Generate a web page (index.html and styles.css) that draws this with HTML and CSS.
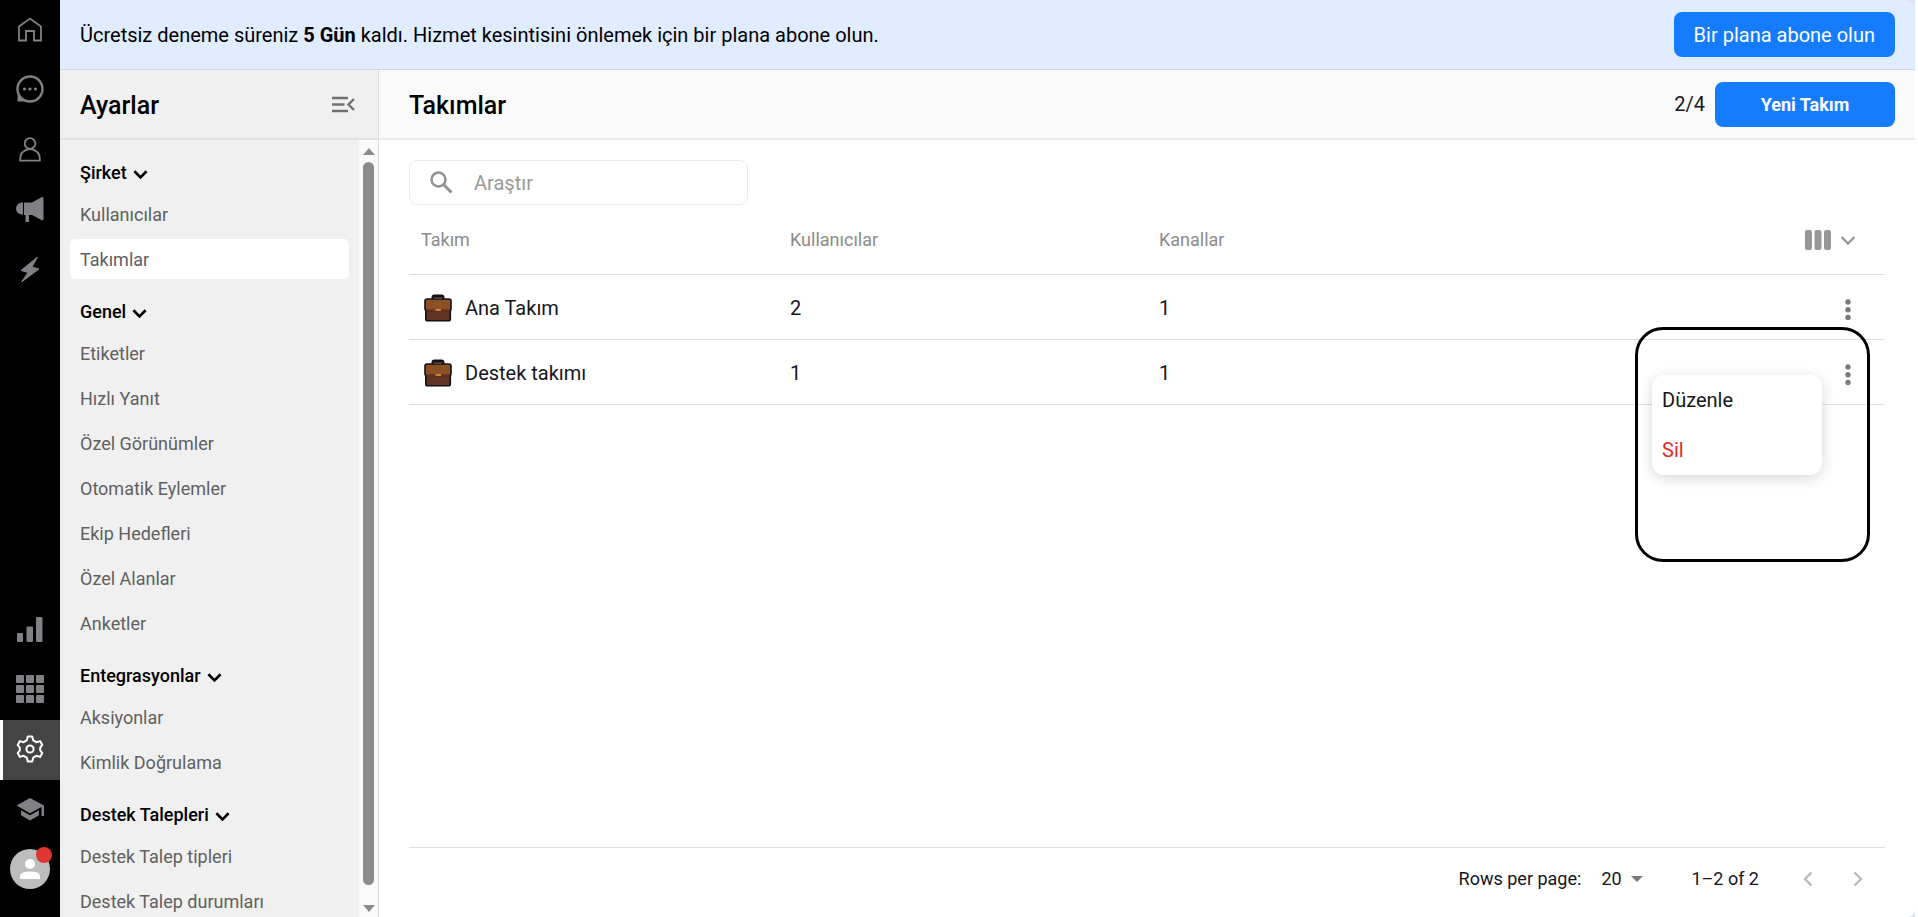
FILE: index.html
```html
<!DOCTYPE html>
<html lang="tr">
<head>
  <meta charset="UTF-8">
  <meta name="viewport" content="width=device-width, initial-scale=1.0">
  <title>Takımlar</title>
  <link rel="stylesheet" href="styles.css">
</head>
<body>
  <!-- Shared icons -->
  <svg class="sprite" aria-hidden="true">
    <symbol id="chevron" viewBox="0 0 16 16">
      <path d="M1.5 4.5 L8 11 L14.5 4.5" fill="none" stroke="currentColor" stroke-width="2.8"/>
    </symbol>
    <symbol id="dots" viewBox="0 0 6 22">
      <circle cx="3" cy="3" r="2.7"/><circle cx="3" cy="10.7" r="2.7"/><circle cx="3" cy="18.4" r="2.7"/>
    </symbol>
    <symbol id="briefcase" viewBox="0 0 28 28">
      <path d="M9 5V3.5Q9 2 10.5 2h7Q19 2 19 3.5V5" fill="none" stroke="#111118" stroke-width="3"/>
      <path d="M9.5 5V3.5h9V5" fill="none" stroke="#5a2d20" stroke-width="1"/>
      <path d="M1.8 16h24.5v9q0 1.8-1.8 1.8h-21q-1.7 0-1.7-1.8z" fill="#613424" stroke="#111118" stroke-width="1.6"/>
      <path d="M1 7q0-2 2-2h22q2 0 2 2v8q0 1.500-1.500 1.500h-23Q1 16.500 1 15z" fill="#8b5024" stroke="#111118" stroke-width="1.6"/>
      <path d="M2.5 15.700h23v1.800h-23z" fill="#613424"/>
      <path d="M11.500 15h5.500v2h-5.500z" fill="#c98428"/>
    </symbol>
  </svg>

  <div class="app">
    <nav class="rail" aria-label="Ana menü">
      <a href="#" aria-label="Ana sayfa">
        <svg width="24" height="25" viewBox="0 0 24 25"><path d="M1 9.500 L12 1.500 L23 9.500 V23.500 H16 V14 H8 V23.500 H1 Z" fill="none" stroke="currentColor" stroke-width="1.800"/></svg>
      </a>
      <a href="#" aria-label="Sohbetler">
        <svg width="28" height="28" viewBox="0 0 28 28">
          <circle cx="14" cy="14" r="12.500" fill="none" stroke="currentColor" stroke-width="2.400"/>
          <path d="M1.500 19.500V26.500H11L6.500 23z" fill="currentColor"/>
          <g fill="currentColor"><circle cx="8.500" cy="14" r="1.600"/><circle cx="14" cy="14" r="1.600"/><circle cx="19.500" cy="14" r="1.600"/></g>
        </svg>
      </a>
      <a href="#" aria-label="Kişiler">
        <svg width="22" height="25" viewBox="0 0 22 25"><g fill="none" stroke="currentColor" stroke-width="1.800"><circle cx="11" cy="6.500" r="5.300"/><path d="M1.200 23.700v-2.200Q1.200 13.500 11 11.800Q20.800 13.500 20.800 21.500v2.200z"/></g></svg>
      </a>
      <a href="#" aria-label="Kampanyalar">
        <svg width="28" height="25" viewBox="0 0 28 25" fill="currentColor"><path d="M7 5.500v12H6a6 6 0 0 1 0-12zM8 5.500h8l9-5q2.500-1.200 2.500 1v20.500q0 2-2.200 1l-9-5H13v7H9.500v-7H8z"/></svg>
      </a>
      <a href="#" aria-label="Otomasyon">
        <svg width="20" height="25" viewBox="0 0 20 25" fill="currentColor"><path d="M17.500 0 1 13.500 8 15.500 1.500 25 19 12 12 10z" stroke="currentColor"/></svg>
      </a>
      <span class="spacer"></span>
      <a href="#" aria-label="Raporlar">
        <svg width="26" height="25" viewBox="0 0 26 25" fill="currentColor"><rect y="16" width="6" height="9" rx="1"/><rect x="9.500" y="9.500" width="6.500" height="15.500" rx="1"/><rect x="19" width="6.500" height="25" rx="1"/></svg>
      </a>
      <a href="#" aria-label="Uygulamalar">
        <svg width="28" height="28" viewBox="0 0 28 28" fill="currentColor">
          <rect width="8" height="8" rx="1"/><rect x="10" width="8" height="8" rx="1"/><rect x="20" width="8" height="8" rx="1"/>
          <rect y="10" width="8" height="8" rx="1"/><rect x="10" y="10" width="8" height="8" rx="1"/><rect x="20" y="10" width="8" height="8" rx="1"/>
          <rect y="20" width="8" height="8" rx="1"/><rect x="10" y="20" width="8" height="8" rx="1"/><rect x="20" y="20" width="8" height="8" rx="1"/>
        </svg>
      </a>
      <a href="#" class="active" aria-label="Ayarlar">
        <svg width="28" height="28" viewBox="0 0 28 28" fill="none" stroke="currentColor" stroke-width="2">
          <path d="M11.800 1.500h4.400l1 3.800 3.200 1.900 3.700-1.100 2.200 3.800-2.100 2.700v2.800l2.100 2.700-2.200 3.800-3.700-1.100-3.200 1.900-1 3.800h-4.400l-1-3.800-3.200-1.900-3.700 1.100-2.200-3.800 2.100-2.700v-2.800L1.700 9.900l2.200-3.800 3.700 1.100 3.200-1.900z" stroke-linejoin="round"/>
          <circle cx="14" cy="14" r="3.600"/>
        </svg>
      </a>
      <a href="#" aria-label="Akademi">
        <svg width="28" height="23" viewBox="0 0 28 23" fill="currentColor"><path d="M14 0 28 7.500V18h-2.500V9L14 15.300.5 7.500zM5 12.300l9 5 9-5v5L14 22.500 5 17.300z"/></svg>
      </a>
      <a href="#" aria-label="Profil">
        <span class="avatar">
          <svg width="20" height="20" viewBox="0 0 20 20" fill="#fff"><circle cx="10" cy="5" r="5"/><path d="M0 20v-2.500Q0 12.500 10 12.500T20 17.500V20z"/></svg>
          <span class="badge"></span>
        </span>
      </a>
    </nav>

    <div class="page">
      <div class="banner">
        <p>Ücretsiz deneme süreniz <b>5 Gün</b> kaldı. Hizmet kesintisini önlemek için bir plana abone olun.</p>
        <button class="btn">Bir plana abone olun</button>
      </div>

      <div class="body">
        <aside class="sidebar">
          <header class="bar">
            <h2>Ayarlar</h2>
            <button class="icon-btn collapse" aria-label="Menüyü daralt">
              <svg width="23" height="17" viewBox="0 0 23 17" fill="none" stroke="currentColor" stroke-width="2.4"><path d="M0 2h16M0 8.500h12.500M0 15h16M22 3l-5.500 5.500L22 14"/></svg>
            </button>
          </header>
          <div class="scroll">
            <div class="groups">
              <section>
                <button class="group">Şirket <svg><use href="#chevron"/></svg></button>
                <a href="#">Kullanıcılar</a>
                <a href="#" class="selected">Takımlar</a>
              </section>
              <section>
                <button class="group">Genel <svg><use href="#chevron"/></svg></button>
                <a href="#">Etiketler</a>
                <a href="#">Hızlı Yanıt</a>
                <a href="#">Özel Görünümler</a>
                <a href="#">Otomatik Eylemler</a>
                <a href="#">Ekip Hedefleri</a>
                <a href="#">Özel Alanlar</a>
                <a href="#">Anketler</a>
              </section>
              <section>
                <button class="group">Entegrasyonlar <svg><use href="#chevron"/></svg></button>
                <a href="#">Aksiyonlar</a>
                <a href="#">Kimlik Doğrulama</a>
              </section>
              <section>
                <button class="group">Destek Talepleri <svg><use href="#chevron"/></svg></button>
                <a href="#">Destek Talep tipleri</a>
                <a href="#">Destek Talep durumları</a>
              </section>
            </div>
            <div class="scrollbar" aria-hidden="true">
              <span class="arrow up"></span>
              <span class="thumb"></span>
              <span class="arrow down"></span>
            </div>
          </div>
        </aside>

        <main>
          <header class="bar">
            <h1>Takımlar</h1>
            <span class="count">2/4</span>
            <button class="btn new-team">Yeni Takım</button>
          </header>

          <div class="content">
            <label class="search">
              <svg width="23" height="23" viewBox="0 0 23 23" fill="none" stroke="currentColor" stroke-width="2.500"><circle cx="8.500" cy="8.500" r="7"/><path d="M13.500 13.500l8 8" stroke-width="3"/></svg>
              <input type="text" placeholder="Araştır" aria-label="Araştır">
            </label>

            <table>
              <thead>
                <tr>
                  <th>Takım</th>
                  <th>Kullanıcılar</th>
                  <th>Kanallar</th>
                  <th class="actions">
                    <button class="icon-btn columns" aria-label="Sütunlar">
                      <svg width="26" height="20" viewBox="0 0 26 20" fill="currentColor"><rect width="7" height="20" rx="2"/><rect x="9.500" width="7" height="20" rx="2"/><rect x="19" width="7" height="20" rx="2"/></svg>
                      <svg width="16" height="16" viewBox="0 0 16 16" fill="none" stroke="currentColor" stroke-width="2.400"><path d="M1.500 5l6.500 6.500L14.500 5"/></svg>
                    </button>
                  </th>
                </tr>
              </thead>
              <tbody>
                <tr>
                  <td><span class="team"><svg><use href="#briefcase"/></svg>Ana Takım</span></td>
                  <td>2</td>
                  <td>1</td>
                  <td class="actions"><button class="icon-btn more" aria-label="Seçenekler"><svg><use href="#dots"/></svg></button></td>
                </tr>
                <tr>
                  <td><span class="team"><svg><use href="#briefcase"/></svg>Destek takımı</span></td>
                  <td>1</td>
                  <td>1</td>
                  <td class="actions">
                    <button class="icon-btn more" aria-label="Seçenekler"><svg><use href="#dots"/></svg></button>
                    <div class="menu">
                      <button>Düzenle</button>
                      <button class="danger">Sil</button>
                    </div>
                    <div class="highlight"></div>
                  </td>
                </tr>
              </tbody>
            </table>

            <footer>
              <label for="rows">Rows per page:</label>
              <span class="select">
                <select id="rows"><option>20</option><option>50</option></select>
              </span>
              <span class="range">1–2 of 2</span>
              <button class="icon-btn" aria-label="Önceki sayfa"><svg width="10" height="16" viewBox="0 0 10 16"><path d="M8.500 1.500L2 8l6.500 6.500" fill="none" stroke="currentColor" stroke-width="2.300"/></svg></button>
              <button class="icon-btn" aria-label="Sonraki sayfa"><svg width="10" height="16" viewBox="0 0 10 16"><path d="M1.500 1.500L8 8l-6.500 6.500" fill="none" stroke="currentColor" stroke-width="2.300"/></svg></button>
            </footer>
          </div>
        </main>
      </div>
    </div>
  </div>
</body>
</html>
```
FILE: styles.css
```css
* {
  box-sizing: border-box;
}

body {
  margin: 0;
  font-family: Roboto, "Liberation Sans", sans-serif;
  font-size: 20px;
  color: #16161d;
  background: #fff;
}

button, input, select {
  font: inherit;
  color: inherit;
}

button {
  border: none;
  background: none;
  padding: 0;
  cursor: pointer;
}

a {
  color: inherit;
  text-decoration: none;
}

h1, h2, p {
  margin: 0;
}

h1, h2 {
  font-size: 25px;
  font-weight: 500;
  color: #000;
}

svg {
  display: block;
  flex: none;
}

.sprite {
  display: none;
}

.app {
  display: flex;
  height: 100vh;
  padding-right: 3px;
}

/* Left icon rail */
.rail {
  width: 60px;
  flex: none;
  display: flex;
  flex-direction: column;
  padding-bottom: 17px;
  background: #000;
  color: #808085;
}

.rail a {
  height: 60px;
  display: flex;
  align-items: center;
  justify-content: center;
  padding-bottom: 2px;
}

.rail .spacer {
  flex: 1;
}

.rail .active {
  background: #444;
  color: #fff;
  box-shadow: inset 3px 0 #fff;
}

.avatar {
  position: relative;
  width: 40px;
  height: 40px;
  display: flex;
  align-items: center;
  justify-content: center;
  border-radius: 50%;
  background: #bdbdbd;
}

.badge {
  position: absolute;
  top: -2px;
  right: -2px;
  width: 16px;
  height: 16px;
  border-radius: 50%;
  background: #e03532;
}

.page {
  flex: 1;
  min-width: 0;
  display: flex;
  flex-direction: column;
  background: #dde6ef;
}

/* Trial banner */
.banner {
  flex: none;
  height: 70px;
  display: flex;
  align-items: center;
  justify-content: space-between;
  padding: 0 20px;
  background: #e0ecff;
  border-bottom: 1px solid #c8d6e8;
  border-top-right-radius: 10px;
  color: #000;
}

.banner b {
  font-weight: 700;
}

.btn {
  height: 45px;
  padding: 0 20px;
  border-radius: 8px;
  background: #167cff;
  color: #fff;
}

.body {
  flex: 1;
  min-height: 0;
  display: flex;
}

.bar {
  flex: none;
  height: 70px;
  display: flex;
  align-items: center;
  border-bottom: 2px solid #e8e8e8;
}

.bar h1, .bar h2 {
  padding-top: 2px;
}

/* Settings sidebar */
.sidebar {
  width: 319px;
  flex: none;
  display: flex;
  flex-direction: column;
  background: #f0f0f0;
  border-right: 1px solid #dcdcdc;
}

.sidebar .bar {
  justify-content: space-between;
  padding: 0 23px 0 20px;
  border-color: #e0e0e0;
}

.collapse {
  color: #707070;
}

.scroll {
  flex: 1;
  min-height: 0;
  display: flex;
}

.groups {
  flex: 1;
  overflow: auto;
  scrollbar-width: none;
  padding: 10px;
  font-size: 18px;
  color: #606060;
}

.groups section {
  display: flex;
  flex-direction: column;
  margin-bottom: 5px;
}

.groups a {
  height: 40px;
  display: flex;
  align-items: center;
  padding: 0 10px;
  margin-bottom: 5px;
  border-radius: 5px;
}

.groups .selected {
  background: #fff;
}

.group {
  height: 44px;
  display: flex;
  align-items: center;
  gap: 6px;
  padding: 0 10px;
  font-weight: 500;
  color: #000;
}

.group svg {
  width: 15px;
  height: 15px;
  margin-top: 4px;
}

.scrollbar {
  width: 19px;
  display: flex;
  flex-direction: column;
  align-items: center;
  gap: 7px;
  padding: 8px 0 5px;
  background: #fafafa;
}

.thumb {
  flex: 1;
  width: 11px;
  border-radius: 6px;
  background: #8b8b8b;
}

.arrow {
  border: 6px solid transparent;
}

.up {
  border-top: 0;
  border-bottom: 7px solid #8b8b8b;
}

.down {
  margin-top: 13px;
  border-bottom: 0;
  border-top: 7px solid #8b8b8b;
}

/* Main area */
main {
  flex: 1;
  min-width: 0;
  display: flex;
  flex-direction: column;
  overflow: hidden;
  background: #fff;
  border-bottom-right-radius: 8px;
}

main .bar {
  padding: 0 20px 0 30px;
  background: #fafafa;
}

.count {
  margin-left: auto;
  margin-right: 10px;
}

.new-team {
  width: 180px;
  font-size: 18px;
  font-weight: 700;
}

.content {
  flex: 1;
  display: flex;
  flex-direction: column;
  padding: 20px 30px 0;
}

.search {
  width: 339px;
  height: 45px;
  display: flex;
  align-items: center;
  gap: 21px;
  padding-left: 20px;
  border: 1px solid #ebebeb;
  border-radius: 8px;
  color: #929292;
}

.search input {
  flex: 1;
  min-width: 0;
  padding: 0;
  border: none;
  outline: none;
  background: none;
}

.search input::placeholder {
  color: #999;
}

table {
  width: 100%;
  table-layout: fixed;
  border-collapse: separate;
  border-spacing: 0;
}

th, td {
  height: 65px;
  padding: 2px 12px 0;
  text-align: left;
  border-bottom: 1px solid #e0e0e0;
}

th {
  height: 70px;
  padding-top: 0;
  font-size: 18px;
  font-weight: 400;
  color: #8b8b8b;
}

.team {
  display: flex;
  align-items: center;
  gap: 13px;
  padding-left: 3px;
}

.team svg {
  width: 28px;
  height: 28px;
}

.actions {
  position: relative;
  padding-right: 29px;
}

.actions .icon-btn {
  margin-left: auto;
}

.icon-btn {
  display: flex;
  align-items: center;
}

.columns {
  gap: 9px;
  color: #979797;
}

.more {
  padding: 4px 5px 0;
  fill: #7a7a7a;
}

.more svg {
  width: 6px;
  height: 22px;
}

/* Row menu */
.menu {
  position: absolute;
  z-index: 1;
  top: 35px;
  right: 63px;
  width: 170px;
  border-radius: 12px;
  background: #fff;
  box-shadow: 0 3px 14px rgba(0, 0, 0, 0.16);
}

.menu button {
  display: block;
  width: 100%;
  height: 50px;
  padding: 0 10px;
  text-align: left;
}

.menu .danger {
  color: #e02b27;
}

.highlight {
  position: absolute;
  top: -13px;
  right: 15px;
  width: 235px;
  height: 235px;
  border: 3px solid #000;
  border-radius: 28px;
  pointer-events: none;
}

/* Pagination */
footer {
  height: 70px;
  display: flex;
  align-items: center;
  justify-content: flex-end;
  padding: 0 22px 8px 0;
  margin-top: auto;
  border-top: 1px solid #e0e0e0;
  font-size: 18px;
}

.select {
  position: relative;
  margin: 0 48px 0 20px;
}

.select select {
  width: 42px;
  padding: 0;
  border: none;
  background: none;
  appearance: none;
}

.select::after {
  content: "";
  position: absolute;
  top: 8px;
  right: 0;
  border: 6px solid transparent;
  border-top-color: #7a7a7a;
  border-bottom: 0;
  pointer-events: none;
}

.range {
  margin-right: 44px;
}

footer .icon-btn {
  color: #b8b8b8;
}

footer .icon-btn + .icon-btn {
  margin-left: 40px;
}
```
